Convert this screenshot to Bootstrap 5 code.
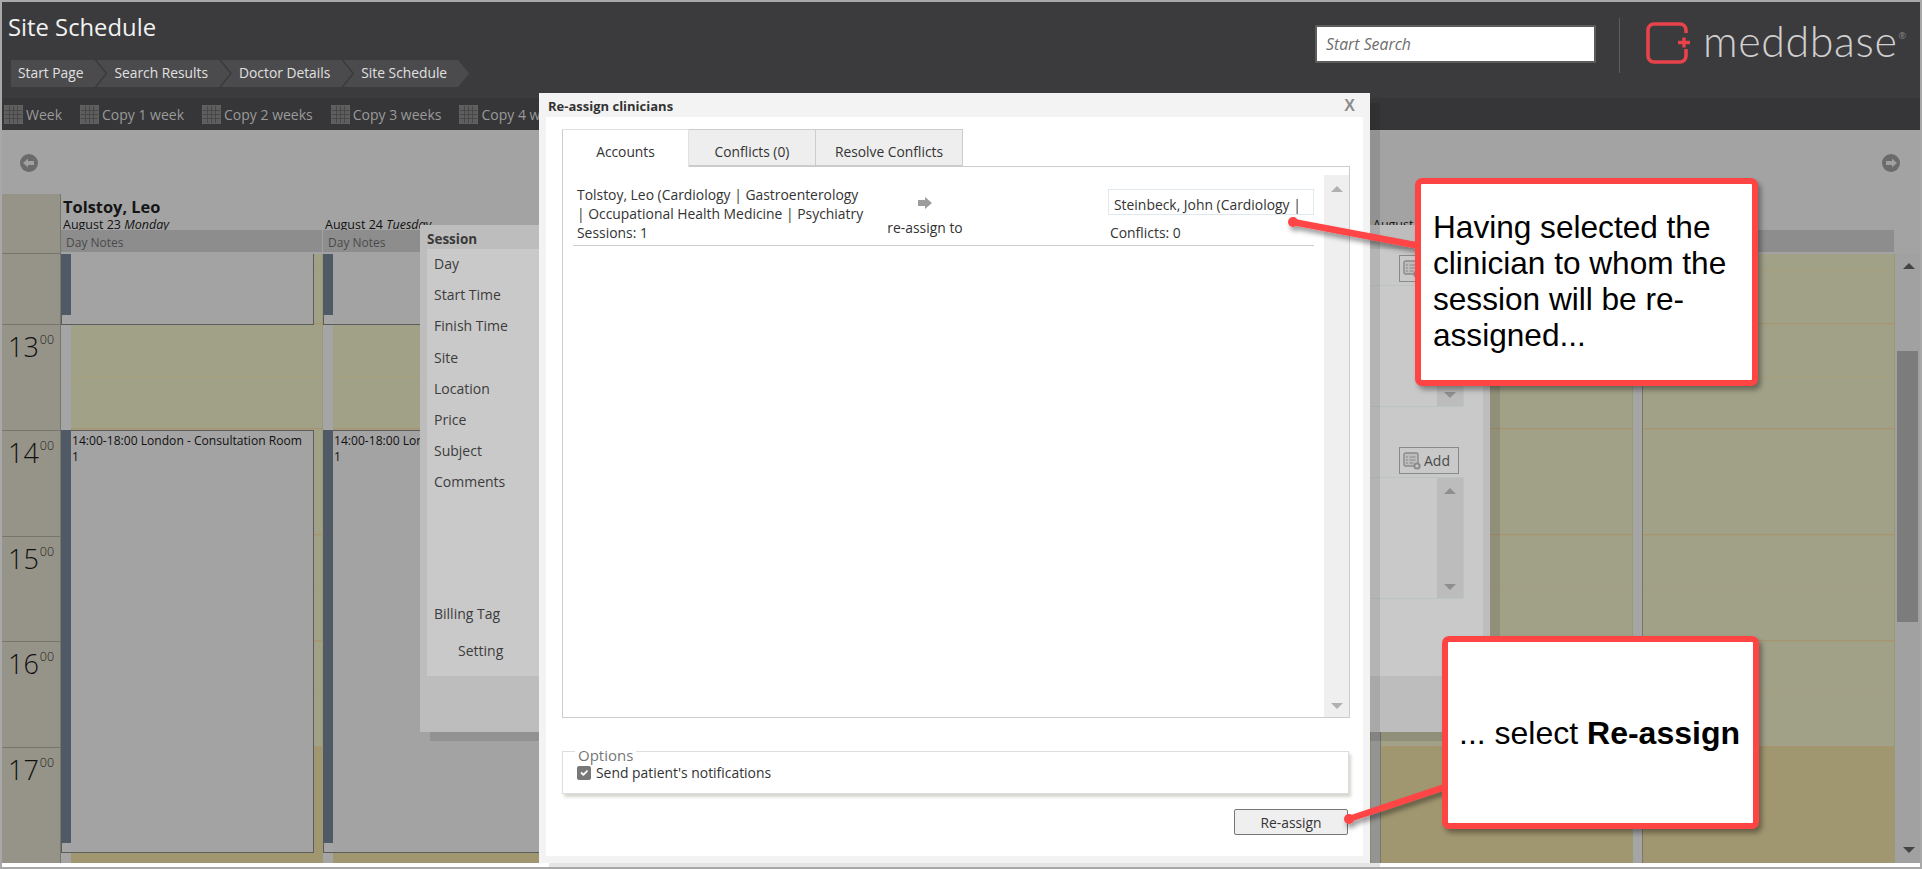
<!DOCTYPE html>
<html lang="en">
<head>
<meta charset="UTF-8">
<title>Site Schedule</title>
<link href="https://cdn.jsdelivr.net/npm/bootstrap@5.3.3/dist/css/bootstrap.min.css" rel="stylesheet">
<style>
html, body { height: 100%; }
body { margin: 0; overflow: hidden; background: #fff; font-family: "Open Sans", "Noto Sans", sans-serif; font-size: 13.9px; color: #333; }

.page-shell { width: 1922px; height: 869px; border: 2px solid #a8a8a8; position: relative; overflow: hidden; }
.app-area { height: 861px; }

/* header */
.top-head { height: 96px; background: #3b3b3d; }
.head-left { flex: 0 0 1313px; padding: 9px 0 0 6px; }
.page-title { font-size: 23.8px; line-height: 32px; color: #f2f2f2; margin: 0; font-weight: 400; }
.crumbs { margin: 17px 0 0 3px; }
.crumb-item { height: 27px; line-height: 26px; background: #4b4b4d; color: #e0e0e0; font-size: 13.8px; padding: 0 22px 0 18px; margin-left: -9px; clip-path: polygon(0 0, calc(100% - 11px) 0, 100% 50%, calc(100% - 11px) 100%, 0 100%, 11px 50%); }
.crumb-item:first-child { margin-left: 0; padding-left: 7px; clip-path: polygon(0 0, calc(100% - 11px) 0, 100% 50%, calc(100% - 11px) 100%, 0 100%); }
.search-box { width: 281px; height: 38px; margin-top: 23px; border: 2px solid #5c5c5c; border-radius: 1px; background: #fff; padding: 0 9px; font-size: 15.8px; font-style: italic; color: #6d6d6d; box-shadow: none; }
.search-box::placeholder { color: #6d6d6d; }
.head-sep { width: 1px; height: 55px; margin: 16px 26px 0 23px; background: #5c5c5c; }
.brand-mark { margin-top: 20px; width: 44px; height: 42px; }
.brand-name { margin: 9px 0 0 13px; font-family: Lato, "Open Sans", sans-serif; font-weight: 300; font-size: 43px; line-height: 60px; color: #cfcfcf; letter-spacing: .6px; }
.brand-reg { font-size: 9px; line-height: 60px; margin: 4px 0 0 1px; color: #8a8a8a; }

.tool-strip { height: 32px; background: #363638; padding-left: 2px; gap: 18px; color: #9a9a9a; font-size: 14px; }
.tool-item { gap: 3px; }
.tool-item svg { width: 19px; height: 19px; }

/* calendar */
.cal-nav { height: 64px; background: #a3a3a3; padding: 23px 19px 0 17px; }
.cal-nav svg { width: 20px; height: 20px; }
.cal-head { height: 60px; background: #a3a3a3; }
.hours-head { flex: 0 0 59px; background: #969488; border-right: 1px solid #77766c; border-bottom: 1px solid #77766c; }
.day-head { flex: 0 0 262px; }
.day-title { height: 36px; overflow: hidden; padding: 3px 0 0 2px; color: #111; }
.doc-name { font-size: 16.4px; line-height: 19px; font-weight: 700; height: 19px; color: #151515; }
.day-date { font-size: 12.5px; line-height: 17px; padding-top: 19px; }
.doc-name + .day-date { padding-top: 0; }
.day-notes { height: 22px; line-height: 26px; font-size: 12px; background: #8d8d8d; color: #4a4a4a; border-right: 1px solid #a3a3a3; padding-left: 5px; overflow: hidden; }

.cal-body { height: 609px; background-color: #a3a3a3; }
.hours-col { flex: 0 0 59px; background: #969488; border-right: 1px solid #77766c; }
.hour-cell { height: 105.75px; border-top: 1px solid #77766c; padding: 5px 0 0 6px; line-height: 34px; }
.hour-cell:first-child { height: 70px; border-top: 0; padding: 0; }
.hour-num { font-size: 27px; font-weight: 300; color: #111; }
.hour-min { font-size: 12.5px; font-weight: 300; color: #222; vertical-align: 13px; line-height: 0; margin-left: 1px; }

.days-wrap { flex: 0 0 1834px; background-color: #a1a188; background-image: linear-gradient(to bottom, transparent 493px, #a0966f 493px); }
.days-lines { background-image: repeating-linear-gradient(to bottom, transparent 0, transparent 52px, rgba(170,150,100,.35) 52px, rgba(170,150,100,.35) 53px, transparent 53px, transparent 104.75px, rgba(175,135,85,.6) 104.75px, rgba(175,135,85,.6) 105.75px); background-position: 0 -35.75px; height: 100%; }
.day-col { flex: 0 0 262px; height: 609px; border-right: 1px solid #9a9a70; }
.stripe-free { flex: 0 0 10px; background: #a5a5a5; border-right: 1px solid #77776a; }
.slot-top { height: 71px; }
.slot-gap { height: 105px; }
.slot-long { height: 423px; }
.slot-end { height: 10px; }
.stripe-gap { flex: 0 0 10px; background: #a5a5a5; }
.stripe-busy { flex: 0 0 10px; background: #4f5a66; }
.stripe-grip { height: 10px; background: #a5a5a5; border: 1px solid #5c5c5c; border-top: 0; border-right: 0; margin-top: auto; }
.sess-block { flex: 0 0 243px; background: #a3a3a3; border: 1px solid #5c5c5c; border-left: 0; color: #111; padding: 2px 0 0 1px; line-height: 16px; font-size: 12.1px; }
.slot-top .sess-block { border-top: 0; }

.sb-track { flex: 0 0 25px; background: #a1a1a1; }
.sb-thumb { position: absolute; left: 1895px; top: 349px; width: 21px; height: 271px; background: #7c7c7c; }
.tri-up, .tri-down { width: 0; height: 0; border-left: 6px solid transparent; border-right: 6px solid transparent; }
.tri-up { border-bottom: 6px solid #444; }
.tri-down { border-top: 6px solid #444; }
.sb-track .tri-up { margin: 9px auto 0 8px; }
.sb-track .tri-down { margin: 0 auto 10px 8px; }

/* dialog behind */
.session-dlg { position: absolute; left: 418px; top: 223px; width: 1070px; height: 507px; background: #bdbdbd; box-shadow: 10px 9px 0 rgba(0,0,0,.1); padding: 0 7px 8px; color: #333; z-index: 5; }
.session-cap { height: 24px; line-height: 29px; font-weight: 700; font-size: 13.5px; color: #3a3a3a; }
.session-inner { height: 475px; background: #bdbdbd; }
.session-form { height: 427px; background: #c9c9c9; }
.label-col { padding: 0 0 0 7px; width: 200px; }
.label-row { height: 31.2px; line-height: 30px; font-size: 14px; color: #3c3c3c; }
.label-row.row-tall { height: 132px; }
.label-row.row-setting { padding-left: 24px; height: 40px; line-height: 39px; }
.side-col { width: 200px; margin-left: auto; padding-right: 19px; padding-top: 6px; }
.add-btn { width: 60px; height: 27px; margin: 0 5px 3px auto; border: 1px solid #8a8a8a; background: #c9c9c9; color: #4a4a4a; font-size: 14px; gap: 3px; padding-left: 3px; }
.add-btn svg { width: 18px; height: 18px; }
.pick-box { height: 122px; background: #c9c9c9; border: 1px solid #bcc3c6; border-left: 0; }
.pick-box + .add-btn { margin-top: 40px; }
.pick-bar { flex: 0 0 26px; background: #bcbcbc; padding: 10px 0 8px; margin-left: auto; }
.pick-bar .tri-up { border-bottom-color: #8f8f8f; margin: 0 auto; }
.pick-bar .tri-down { border-top-color: #8f8f8f; margin: auto auto 0; }

/* main dialog */
.assign-dlg { position: absolute; left: 537px; top: 91px; width: 831px; height: 770px; background: #f3f3f3; box-shadow: 10px 10px 0 rgba(0,0,0,.1); padding: 0 7px 7px; z-index: 10; }
.assign-cap { height: 24px; line-height: 27px; font-weight: 700; font-size: 13px; color: #333; margin-left: -7px; padding: 0 0 0 9px; }
.close-x { font-size: 16px; font-weight: 700; color: #8d8d8d; line-height: 26px; padding-right: 8px; font-family: "Liberation Sans", sans-serif; }
.assign-body { height: 739px; background: #fff; padding: 12px 13px 0 16px; }
.tab-row { height: 38px; border: 0; margin-bottom: -1px; position: relative; z-index: 1; }
.tab-row .nav-link { height: 38px; line-height: 43px; padding: 0; width: 127px; text-align: center; color: #333; background: #eee; border: 1px solid #ccc; border-left: 0; border-bottom: 2px solid #ccc; border-radius: 0; font-size: 13.8px; }
.tab-row .nav-item:last-child .nav-link { width: 147px; }
.tab-row .nav-link.active { background: #fff; border-left: 1px solid #ccc; border-bottom: 0; color: #333; }
.assign-panel { height: 552px; border: 1px solid #ccc; padding-top: 8px; }
.assign-list { padding: 10px 10px 0 10px; }
.assign-row { height: 61px; border-bottom: 1px solid #ccc; }
.from-txt { flex: 0 0 297px; padding-left: 4px; line-height: 19px; white-space: nowrap; }
.mid-txt { flex: 0 0 238px; padding: 11px 128px 0 0; line-height: 19px; white-space: nowrap; }
.mid-txt svg { width: 16px; height: 14px; margin-bottom: 8px; }
.to-box { width: 206px; }
.to-input { height: 26px; margin-top: 4px; border: 1px solid #dfe8ee; line-height: 30px; padding-left: 5px; white-space: nowrap; overflow: hidden; }
.to-conf { padding: 9px 0 0 2px; line-height: 18px; }
.panel-bar { flex: 0 0 25px; background: #efefef; padding: 11px 0 8px; }
.panel-bar .tri-up { border-bottom-color: #b0b0b0; margin: 0 auto; }
.panel-bar .tri-down { border-top-color: #b0b0b0; margin: auto auto 0; }

.opt-set { margin-top: 21px; width: 787px; height: 55px; border: 1px solid #ddd; box-shadow: 2px 3px 3px #d5d5d0; padding: 0 12px; }
.opt-legend { float: none; width: auto; margin: 0; padding: 8px 3px 0; font-size: 15px; line-height: 16px; color: #777; }
.opt-check { gap: 5px; margin-left: 2px; }
.opt-check .form-check-input { width: 14px; height: 14px; margin: 0; border-radius: 2px; background-color: #787878; border-color: #787878; opacity: 1; }
.opt-foot { margin-top: 15px; width: 786px; }
.do-btn { width: 114px; height: 26px; padding: 0; line-height: 23px; font-size: 13.8px; color: #333; background: #efefef; border: 1px solid #777; border-radius: 2px; }

/* callouts */
.callout-svg { position: absolute; left: -2px; top: -2px; width: 1922px; height: 869px; z-index: 20; pointer-events: none; }
.note-box { position: absolute; z-index: 30; background: #fff; border: 6px solid #ff4444; border-radius: 7px; box-shadow: 3px 4px 5px rgba(0,0,0,.35); font-family: "Liberation Sans", Arial, sans-serif; line-height: 36px; color: #000; }
.note-one { left: 1413px; top: 176px; width: 343px; height: 208px; padding: 25px 8px 0 12px; font-size: 31.6px; }
.note-two { left: 1440px; top: 634px; width: 317px; height: 193px; padding: 0 0 0 11px; white-space: nowrap; font-size: 32px; }
</style>
</head>
<body>

<svg class="d-none">
  <symbol id="grid-ico" viewBox="0 0 19 19">
    <rect width="19" height="19" fill="#5e5e5e"/>
    <path d="M0 .5h19M0 5.500h19M0 9.500h19M0 13.500h19M0 18.500h19M.5 0v19M5.500 0v19M9.500 0v19M13.500 0v19M18.500 0v19" stroke="#484848" stroke-width="1" fill="none"/>
    <rect x="0" y="0" width="19" height="19" fill="none" stroke="#777"/>
  </symbol>
  <symbol id="add-ico" viewBox="0 0 18 18">
    <rect x="1" y="1" width="14" height="13" rx="1.5" fill="#bdbdbd" stroke="#8a8a8a" stroke-width="1.4"/>
    <path d="M3 5h2M6.500 5h6M3 8h2M6.500 8h6M3 11h2M6.500 11h4" stroke="#8a8a8a" stroke-width="1.2"/>
    <circle cx="14" cy="14" r="3.6" fill="#8a8a8a"/>
    <path d="M12.300 14h3.400M14 12.300v3.400" stroke="#ddd" stroke-width="1"/>
  </symbol>
</svg>

<div class="page-shell">
  <div class="app-area">

    <div class="top-head d-flex">
      <div class="head-left">
        <h1 class="page-title">Site Schedule</h1>
        <div class="crumbs d-flex">
          <div class="crumb-item">Start Page</div>
          <div class="crumb-item">Search Results</div>
          <div class="crumb-item">Doctor Details</div>
          <div class="crumb-item">Site Schedule</div>
        </div>
      </div>
      <input class="search-box" type="text" placeholder="Start Search">
      <div class="head-sep"></div>
      <svg class="brand-mark" viewBox="0 0 44 42">
        <path d="M40 11V8a6 6 0 0 0-6-6H8a6 6 0 0 0-6 6v26a6 6 0 0 0 6 6h26a6 6 0 0 0 6-6v-7" fill="none" stroke="#e8434a" stroke-width="3.600"/>
        <path d="M32 20.500h12M38 15.500v10" stroke="#e8434a" stroke-width="3.400" fill="none"/>
      </svg>
      <div class="brand-name">meddbase</div>
      <div class="brand-reg">®</div>
    </div>

    <div class="tool-strip d-flex align-items-center">
      <div class="tool-item d-flex align-items-center"><svg><use href="#grid-ico"/></svg>Week</div>
      <div class="tool-item d-flex align-items-center"><svg><use href="#grid-ico"/></svg>Copy 1 week</div>
      <div class="tool-item d-flex align-items-center"><svg><use href="#grid-ico"/></svg>Copy 2 weeks</div>
      <div class="tool-item d-flex align-items-center"><svg><use href="#grid-ico"/></svg>Copy 3 weeks</div>
      <div class="tool-item d-flex align-items-center"><svg><use href="#grid-ico"/></svg>Copy 4 weeks</div>
    </div>

    <div class="cal-nav d-flex justify-content-between">
      <svg viewBox="0 0 20 20"><circle cx="10" cy="10" r="9" fill="#6b6b6b"/><path d="M4 10l5-4.500V8h6v4H9v2.500z" fill="#a0a0a0"/></svg>
      <svg viewBox="0 0 20 20"><circle cx="10" cy="10" r="9" fill="#6b6b6b"/><path d="M16 10l-5-4.500V8H5v4h6v2.500z" fill="#a0a0a0"/></svg>
    </div>

    <div class="cal-head d-flex">
      <div class="hours-head"></div>
      <div class="day-head"><div class="day-title"><div class="doc-name">Tolstoy, Leo</div><div class="day-date">August 23 <em>Monday</em></div></div><div class="day-notes">Day Notes</div></div>
      <div class="day-head"><div class="day-title"><div class="day-date">August 24 <em>Tuesday</em></div></div><div class="day-notes">Day Notes</div></div>
      <div class="day-head"><div class="day-title"></div><div class="day-notes"></div></div>
      <div class="day-head"><div class="day-title"></div><div class="day-notes"></div></div>
      <div class="day-head"><div class="day-title"></div><div class="day-notes"></div></div>
      <div class="day-head"><div class="day-title"><div class="day-date">August</div></div><div class="day-notes"></div></div>
      <div class="day-head"><div class="day-title"></div><div class="day-notes"></div></div>
    </div>

    <div class="cal-body d-flex">
      <div class="hours-col">
        <div class="hour-cell"></div>
        <div class="hour-cell"><span class="hour-num">13</span><span class="hour-min">00</span></div>
        <div class="hour-cell"><span class="hour-num">14</span><span class="hour-min">00</span></div>
        <div class="hour-cell"><span class="hour-num">15</span><span class="hour-min">00</span></div>
        <div class="hour-cell"><span class="hour-num">16</span><span class="hour-min">00</span></div>
        <div class="hour-cell"><span class="hour-num">17</span><span class="hour-min">00</span></div>
      </div>
      <div class="days-wrap">
        <div class="days-lines d-flex">
          <div class="day-col">
            <div class="slot-top d-flex"><div class="stripe-busy d-flex flex-column"><div class="stripe-grip"></div></div><div class="sess-block"></div></div>
            <div class="slot-gap d-flex"><div class="stripe-gap"></div></div>
            <div class="slot-long d-flex"><div class="stripe-busy d-flex flex-column"><div class="stripe-grip"></div></div><div class="sess-block">14:00-18:00 London - Consultation Room<br>1</div></div>
            <div class="slot-end d-flex"><div class="stripe-gap"></div></div>
          </div>
          <div class="day-col">
            <div class="slot-top d-flex"><div class="stripe-busy d-flex flex-column"><div class="stripe-grip"></div></div><div class="sess-block"></div></div>
            <div class="slot-gap d-flex"><div class="stripe-gap"></div></div>
            <div class="slot-long d-flex"><div class="stripe-busy d-flex flex-column"><div class="stripe-grip"></div></div><div class="sess-block">14:00-18:00 London - Consultation Room<br>1</div></div>
            <div class="slot-end d-flex"><div class="stripe-gap"></div></div>
          </div>
          <div class="day-col d-flex"><div class="stripe-free"></div></div>
          <div class="day-col d-flex"><div class="stripe-free"></div></div>
          <div class="day-col d-flex"><div class="stripe-free"></div></div>
          <div class="day-col d-flex"><div class="stripe-free"></div></div>
          <div class="day-col d-flex"><div class="stripe-free"></div></div>
        </div>
      </div>
      <div class="sb-track d-flex flex-column justify-content-between"><div class="tri-up"></div><div class="tri-down"></div></div>
    </div>
  </div>

  <div class="sb-thumb"></div>

  <!-- session dialog, sits behind the re-assign one -->
  <div class="session-dlg">
    <div class="session-cap">Session</div>
    <div class="session-inner">
      <div class="session-form d-flex">
        <div class="label-col">
          <div class="label-row">Day</div>
          <div class="label-row">Start Time</div>
          <div class="label-row">Finish Time</div>
          <div class="label-row">Site</div>
          <div class="label-row">Location</div>
          <div class="label-row">Price</div>
          <div class="label-row">Subject</div>
          <div class="label-row row-tall">Comments</div>
          <div class="label-row">Billing Tag</div>
          <div class="label-row row-setting">Setting</div>
        </div>
        <div class="side-col">
          <div class="add-btn d-flex align-items-center"><svg><use href="#add-ico"/></svg></div>
          <div class="pick-box d-flex"><div class="pick-bar d-flex flex-column"><div class="tri-up"></div><div class="tri-down"></div></div></div>
          <div class="add-btn d-flex align-items-center"><svg><use href="#add-ico"/></svg>Add</div>
          <div class="pick-box d-flex"><div class="pick-bar d-flex flex-column"><div class="tri-up"></div><div class="tri-down"></div></div></div>
        </div>
      </div>
    </div>
  </div>

  <!-- re-assign dialog -->
  <div class="assign-dlg">
    <div class="assign-cap d-flex justify-content-between"><span>Re-assign clinicians</span><span class="close-x">X</span></div>
    <div class="assign-body">
      <ul class="nav nav-tabs tab-row">
        <li class="nav-item"><a class="nav-link active" href="#">Accounts</a></li>
        <li class="nav-item"><a class="nav-link" href="#">Conflicts (0)</a></li>
        <li class="nav-item"><a class="nav-link" href="#">Resolve Conflicts</a></li>
      </ul>
      <div class="assign-panel d-flex">
        <div class="assign-list flex-fill">
          <div class="assign-row d-flex">
            <div class="from-txt">Tolstoy, Leo (Cardiology | Gastroenterology<br>| Occupational Health Medicine | Psychiatry<br>Sessions: 1</div>
            <div class="mid-txt text-center">
              <svg viewBox="0 0 16 14"><path d="M1 4h7V1l7 6-7 6v-3H1z" fill="#9c9c9c"/></svg><br>re-assign to
            </div>
            <div class="to-box">
              <div class="to-input">Steinbeck, John (Cardiology |</div>
              <div class="to-conf">Conflicts: 0</div>
            </div>
          </div>
        </div>
        <div class="panel-bar d-flex flex-column"><div class="tri-up"></div><div class="tri-down"></div></div>
      </div>
      <fieldset class="opt-set">
        <legend class="opt-legend">Options</legend>
        <label class="opt-check d-flex align-items-center"><input class="form-check-input" type="checkbox" checked disabled>Send patient's notifications</label>
      </fieldset>
      <div class="opt-foot d-flex justify-content-end"><button type="button" class="btn do-btn">Re-assign</button></div>
    </div>
  </div>

  <!-- annotation leaders -->
  <svg class="callout-svg" viewBox="0 0 1922 869">
    <defs><filter id="lead-shadow" x="-10%" y="-50%" width="120%" height="200%"><feDropShadow dx="2" dy="4" stdDeviation="2.500" flood-opacity=".4"/></filter></defs>
    <g filter="url(#lead-shadow)" fill="#ff4444" stroke="#ff4444">
      <path d="M1293 222L1420 246" stroke-width="6.500" fill="none"/>
      <circle cx="1293" cy="222" r="5" stroke="none"/>
      <path d="M1349 819L1445 787" stroke-width="6.500" fill="none"/>
      <circle cx="1349" cy="819" r="5" stroke="none"/>
    </g>
  </svg>

  <div class="note-box note-one">Having selected the clinician to whom the session will be re-assigned...</div>
  <div class="note-box note-two d-flex align-items-center"><span>... select <strong>Re-assign</strong></span></div>
</div>

</body>
</html>
